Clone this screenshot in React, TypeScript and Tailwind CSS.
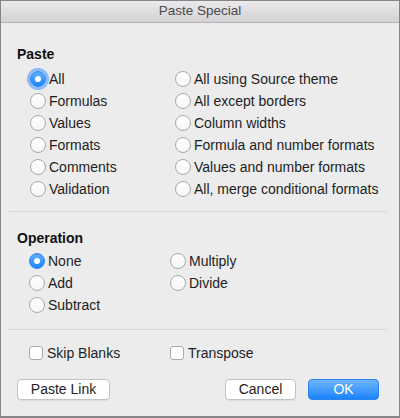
import React from 'react';

const Radio = ({ checked = false, focus = false }: { checked?: boolean; focus?: boolean }) => {
  if (checked) {
    return (
      <span
        className={`flex h-[16px] w-[16px] shrink-0 items-center justify-center rounded-full border border-[#2a85f0] bg-gradient-to-b from-[#5cadfd] to-[#1a84fa] ${
          focus ? 'shadow-[0_0_0_3px_rgba(110,170,250,0.75)]' : ''
        }`}
      >
        <span className="h-[6px] w-[6px] rounded-full bg-white" />
      </span>
    );
  }
  return (
    <span className="h-[16px] w-[16px] shrink-0 rounded-full border border-[#a9a9a9] bg-gradient-to-b from-white to-[#f6f6f6] shadow-[inset_0_1px_0_rgba(255,255,255,0.9)]" />
  );
};

const RadioRow = ({ label, checked, focus }: { label: string; checked?: boolean; focus?: boolean }) => (
  <div className="flex h-[22px] items-center">
    <Radio checked={checked} focus={focus} />
    <span className="ml-[3px] text-[14px] text-[#1e1e1e]">{label}</span>
  </div>
);

const Check = ({ label }: { label: string }) => (
  <div className="flex h-[22px] items-center">
    <span className="h-[14px] w-[14px] shrink-0 rounded-[3px] border border-[#a9a9a9] bg-white" />
    <span className="ml-[4px] text-[14px] text-[#1e1e1e]">{label}</span>
  </div>
);

const pasteLeft = ['All', 'Formulas', 'Values', 'Formats', 'Comments', 'Validation'];
const pasteRight = [
  'All using Source theme',
  'All except borders',
  'Column widths',
  'Formula and number formats',
  'Values and number formats',
  'All, merge conditional formats',
];

const App = () => {
  return (
    <div
      className="flex h-[418px] w-[400px] flex-col bg-[#ececec] border-x border-t border-b-2 border-[#858585]"
      style={{ fontFamily: '"Liberation Sans", Arial, sans-serif' }}
    >
      <div className="flex h-[22px] shrink-0 items-center justify-center border-b border-[#b4b4b4] bg-gradient-to-b from-[#ebe9eb] to-[#d4d2d4] text-[13.5px] text-[#4a4a4a]">
        Paste Special
      </div>

      <div className="pl-[16px] pt-[23px] text-[14px] font-bold leading-[16px] text-[#111]">Paste</div>
      <div className="mt-[6px] grid grid-cols-[145px_1fr] pl-[29px]">
        <div className="flex flex-col">
          {pasteLeft.map((l, i) => (
            <RadioRow key={l} label={l} checked={i === 0} focus={i === 0} />
          ))}
        </div>
        <div className="flex flex-col">
          {pasteRight.map((l) => (
            <RadioRow key={l} label={l} />
          ))}
        </div>
      </div>

      <div className="ml-[8px] mr-[12px] mt-[11px] h-px bg-[#d6d6d6]" />

      <div className="pl-[16px] pt-[18px] text-[14px] font-bold leading-[16px] text-[#111]">Operation</div>
      <div className="mt-[4px] grid grid-cols-[141px_1fr] pl-[28px]">
        <div className="flex flex-col">
          <RadioRow label="None" checked />
          <RadioRow label="Add" />
          <RadioRow label="Subtract" />
        </div>
        <div className="flex flex-col">
          <RadioRow label="Multiply" />
          <RadioRow label="Divide" />
        </div>
      </div>

      <div className="ml-[8px] mr-[12px] mt-[13px] h-px bg-[#d6d6d6]" />

      <div className="mt-[12px] grid grid-cols-[141px_1fr] pl-[28px]">
        <Check label="Skip Blanks" />
        <Check label="Transpose" />
      </div>

      <div className="mt-[15px] flex items-center pl-[16px] pr-[20px]">
        <button className="flex h-[21px] w-[93px] items-center justify-center rounded-[4px] border border-[#c3c3c3] bg-white text-[14px] text-[#1e1e1e] shadow-[0_1px_0_rgba(0,0,0,0.06)]">
          Paste Link
        </button>
        <div className="flex-1" />
        <button className="flex h-[21px] w-[71px] items-center justify-center rounded-[4px] border border-[#c3c3c3] bg-white text-[14px] text-[#1e1e1e] shadow-[0_1px_0_rgba(0,0,0,0.06)]">
          Cancel
        </button>
        <button className="ml-[12px] flex h-[21px] w-[71px] items-center justify-center rounded-[4px] border border-[#2b84ee] bg-gradient-to-b from-[#6cb4fb] to-[#1583fb] text-[14px] text-white">
          OK
        </button>
      </div>
    </div>
  );
};

export default App;
